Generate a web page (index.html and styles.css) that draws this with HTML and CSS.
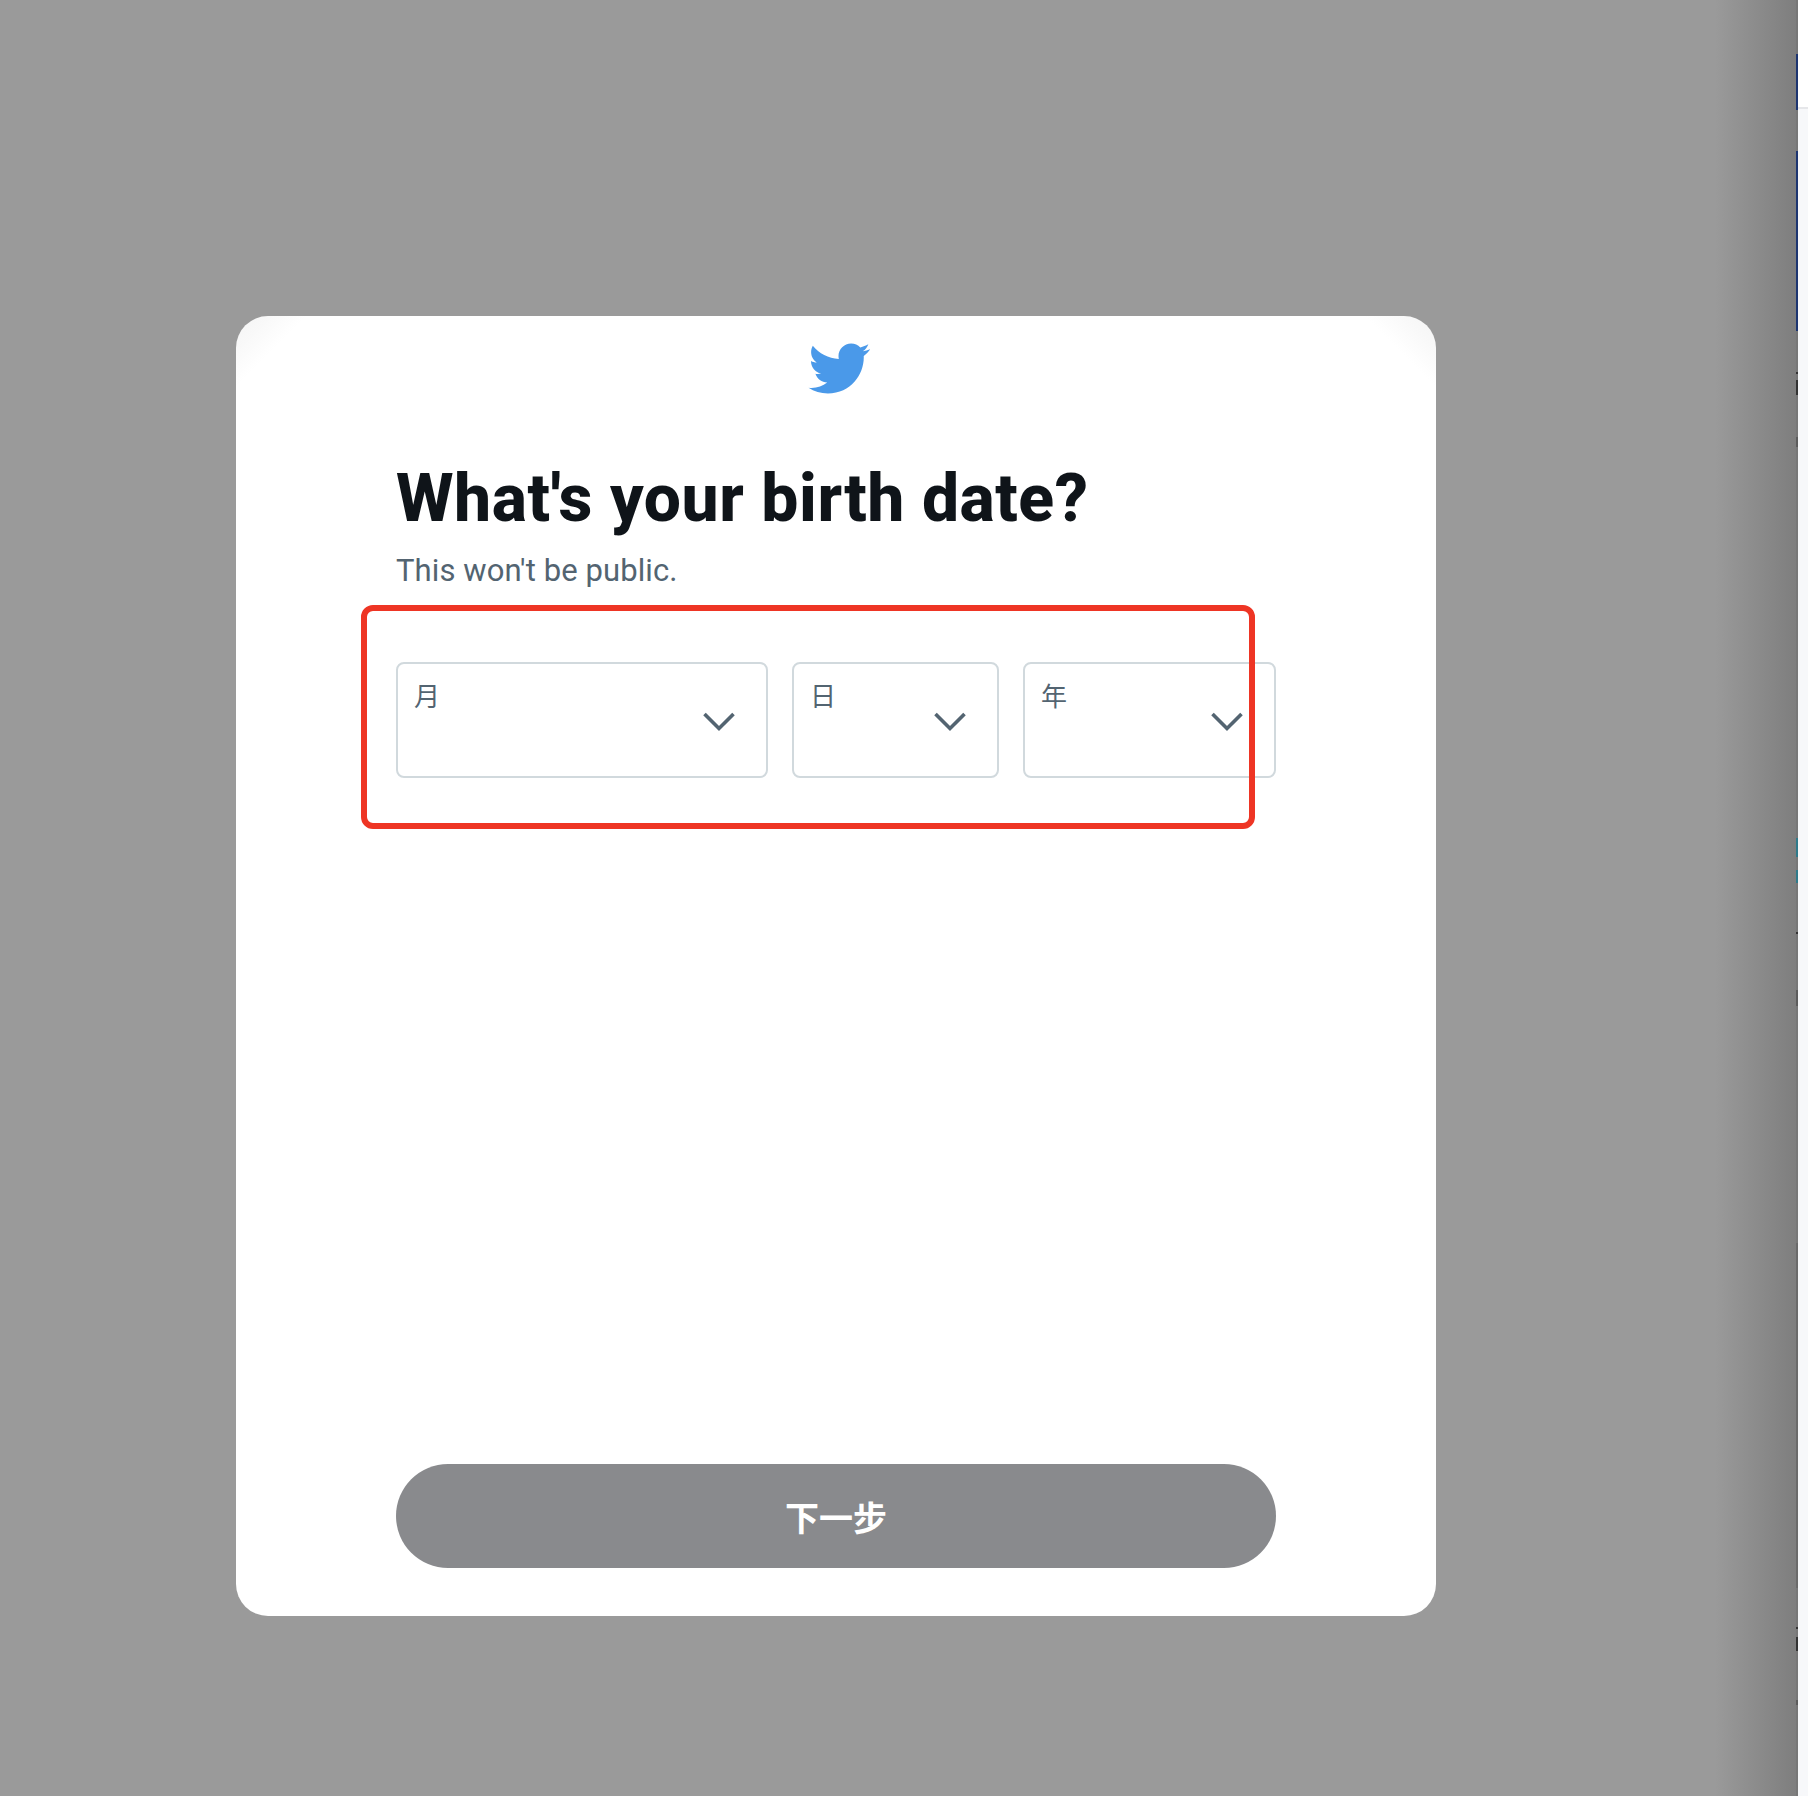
FILE: index.html
```html
<!DOCTYPE html>
<html lang="en">
<head>
<meta charset="utf-8">
<title>What's your birth date?</title>
<link rel="stylesheet" href="styles.css">
</head>
<body>
<div class="screen">
  <div class="backdrop">
    <section class="modal">
      <header class="modal-head">
        <svg class="logo" viewBox="0 0 24 24" aria-hidden="true"><path d="M23.643 4.937c-.835.37-1.732.62-2.675.733.962-.576 1.7-1.49 2.048-2.578-.9.534-1.897.922-2.958 1.13-.85-.904-2.06-1.47-3.4-1.47-2.572 0-4.658 2.086-4.658 4.66 0 .364.042.718.12 1.06-3.873-.195-7.304-2.05-9.602-4.868-.4.69-.63 1.49-.63 2.342 0 1.616.823 3.043 2.072 3.878-.764-.025-1.482-.234-2.11-.583v.06c0 2.257 1.605 4.14 3.737 4.568-.392.106-.803.162-1.227.162-.3 0-.593-.028-.877-.082.593 1.85 2.313 3.198 4.352 3.234-1.595 1.25-3.604 1.995-5.786 1.995-.376 0-.747-.022-1.112-.065 2.062 1.323 4.51 2.093 7.14 2.093 8.57 0 13.255-7.098 13.255-13.254 0-.2-.005-.402-.014-.602.91-.658 1.7-1.477 2.323-2.41z"/></svg>
      </header>
      <div class="modal-body">
        <h1 class="title">What's your birth date?</h1>
        <p class="subtitle">This won't be public.</p>
        <div class="fields">
          <div class="field"><span class="field-label">月</span><svg class="chevron" viewBox="0 0 32 20" aria-hidden="true"><path d="M1.5 2 16 16.5 30.500 2"/></svg></div>
          <div class="field"><span class="field-label">日</span><svg class="chevron" viewBox="0 0 32 20" aria-hidden="true"><path d="M1.5 2 16 16.500 30.500 2"/></svg></div>
          <div class="field"><span class="field-label">年</span><svg class="chevron" viewBox="0 0 32 20" aria-hidden="true"><path d="M1.5 2 16 16.500 30.500 2"/></svg></div>
        </div>
        <div class="annotation"></div>
        <button class="next" type="button">下一步</button>
      </div>
    </section>
  </div>
  <div class="page-edge"></div>
  <div class="page-rest"></div>
</div>
</body>
</html>
```
FILE: styles.css
```css
* { box-sizing: border-box; }
html, body { margin: 0; padding: 0; }
body {
  width: 1808px;
  height: 1796px;
  overflow: hidden;
  font-family: Roboto, "Noto Sans CJK SC", sans-serif;
}
.screen {
  display: flex;
  height: 1796px;
}
.backdrop {
  flex: 0 0 1796px;
  padding: 316px 0 0 236px;
  background: linear-gradient(90deg, #9a9a9a 0, #9a9a9a 1715px, #7e7e7e 1796px);
}
.page-edge {
  flex: 0 0 2px;
  background: linear-gradient(180deg,
    #777 0, #777 54px,
    #1d3570 54px, #1d3570 110px,
    #777 110px, #777 151px,
    #1d3570 151px, #1d3570 331px,
    #777 331px, #777 372px,
    #333 372px, #333 374px,
    #777 374px, #777 380px,
    #333 380px, #333 395px,
    #777 395px, #777 437px,
    #5c5c5c 437px, #5c5c5c 447px,
    #777 447px, #777 838px,
    #2f7a8a 838px, #2f7a8a 857px,
    #777 857px, #777 870px,
    #2f7a8a 870px, #2f7a8a 883px,
    #777 883px, #777 932px,
    #333 932px, #333 934px,
    #777 934px, #777 990px,
    #5c5c5c 990px, #5c5c5c 1006px,
    #777 1006px, #777 1243px,
    #6a6a6a 1243px, #6a6a6a 1588px,
    #777 1588px, #777 1627px,
    #333 1627px, #333 1629px,
    #777 1629px, #777 1637px,
    #333 1637px, #333 1651px,
    #777 1651px, #777 1700px,
    #5c5c5c 1700px, #5c5c5c 1705px,
    #777 1705px);
}
.page-rest {
  flex: 1;
  background: linear-gradient(180deg, #fff 0, #fff 107px, #e6e7ea 107px, #e6e7ea 109px, #f7f8fa 109px);
}
.modal {
  display: flex;
  flex-direction: column;
  width: 1200px;
  height: 1300px;
  border-radius: 32px;
  background:
    linear-gradient(135deg, #f4f4f4 0, #f9f9f9 25px, #fff 50px) top left / 80px 80px no-repeat,
    linear-gradient(225deg, #f4f4f4 0, #f9f9f9 25px, #fff 50px) top right / 80px 80px no-repeat,
    #fff;
}
.modal-head {
  display: flex;
  justify-content: center;
  padding: 20px 0 0 4px;
}
.logo {
  display: block;
  width: 65px;
  height: 65px;
  fill: #4a99e9;
}
.modal-body {
  position: relative;
  flex: 1;
  display: flex;
  flex-direction: column;
  padding: 0 160px 48px;
}
.title {
  margin: 60px 0 0;
  font-size: 66px;
  line-height: 76px;
  font-weight: 800;
  letter-spacing: 0.55px;
  color: #0f1419;
}
.subtitle {
  margin: 14px 0 0;
  font-size: 31px;
  line-height: 40px;
  letter-spacing: 0.1px;
  color: #536471;
}
.fields {
  display: grid;
  grid-template-columns: 372px 207px 253px;
  gap: 24px;
  margin-top: 71px;
}
.field {
  display: flex;
  justify-content: space-between;
  height: 116px;
  padding: 14px 31px 0 16px;
  border: 2px solid #d1d9dd;
  border-radius: 8px;
}
.field-label {
  font-size: 26px;
  line-height: 38px;
  color: #536471;
}
.chevron {
  display: block;
  width: 32px;
  height: 20px;
  margin-top: 34px;
  fill: none;
  stroke: #536471;
  stroke-width: 3.6;
}
.annotation {
  position: absolute;
  left: 125px;
  top: 204px;
  width: 894px;
  height: 224px;
  border: 6px solid #ee3524;
  border-radius: 12px;
}
.next {
  margin-top: auto;
  height: 104px;
  border: 0;
  border-radius: 52px;
  background: #898a8d;
  color: #fff;
  font-family: "Noto Sans CJK SC", sans-serif;
  font-size: 34px;
  font-weight: 700;
}
```
